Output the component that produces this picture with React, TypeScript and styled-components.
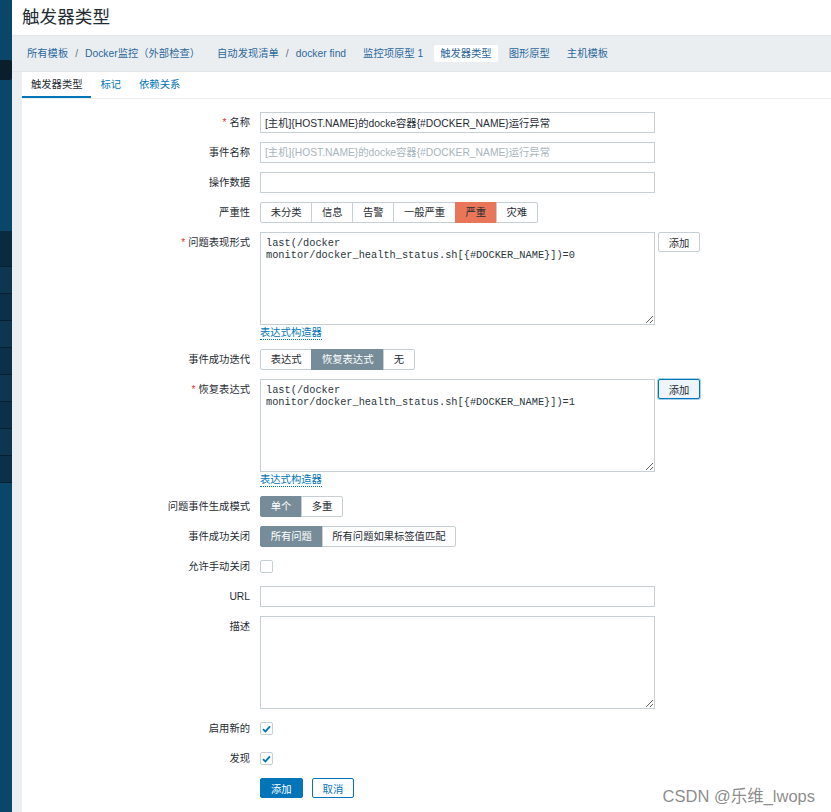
import styled, { createGlobalStyle } from "styled-components";

const GlobalStyle = createGlobalStyle`
  html, body {
    margin: 0;
    padding: 0;
  }
  body {
    font-family: "Liberation Sans", "Noto Sans CJK SC", sans-serif;
    font-size: 10.3px;
    color: #1f2c33;
    background: #ebeef0;
  }
  * {
    box-sizing: border-box;
  }
`;

const Page = styled.div`
  position: relative;
  display: flex;
  min-height: 812px;
`;

const Sidebar = styled.aside`
  width: 12px;
  flex: none;
  background: #0a466a;
  display: flex;
  flex-direction: column;
  padding-top: 60px;
`;

const Collapse = styled.div`
  width: 12px;
  height: 20px;
  background: #0b1e2b;
  border-radius: 0 3px 3px 0;
  margin-bottom: 151px;
`;

const MenuItem = styled.div<{ $active?: boolean; $shade?: boolean }>`
  height: ${(p) => (p.$active ? 36 : 27)}px;
  background: ${(p) => (p.$active ? "#0a2a3f" : p.$shade ? "#0c3049" : "#0e3651")};
  border-bottom: 1px solid #081f2f;
`;

const Main = styled.main`
  flex: 1;
  display: flex;
  flex-direction: column;
  min-width: 0;
`;

const Header = styled.header`
  height: 36px;
  background: #fff;
  padding-left: 10px;
  border-bottom: 1px solid #e2e6e9;
`;

const Title = styled.h1`
  margin: 0;
  font-size: 17.6px;
  font-weight: normal;
  line-height: 35px;
  color: #1f2c33;
`;

const Crumbs = styled.nav`
  height: 36px;
  display: flex;
  align-items: center;
  gap: 5px;
  padding-left: 9px;
  border-bottom: 1px solid #e2e6e9;
`;

const CrumbGroup = styled.div<{ $selected?: boolean }>`
  display: flex;
  align-items: center;
  gap: 7px;
  padding: 0 6px;
  height: 17px;
  line-height: 17px;
  border-radius: 2px;
  background: ${(p) => (p.$selected ? "#fff" : "transparent")};
  color: #2c689c;
  white-space: nowrap;
`;

const Slash = styled.span`
  color: #5b6f7b;
`;

const Panel = styled.section`
  flex: 1;
  margin-left: 10px;
  background: #fff;
`;

const Tabs = styled.div`
  display: flex;
  height: 27px;
  border-bottom: 1px solid #ebeef0;
`;

const Tab = styled.div<{ $active?: boolean }>`
  padding: 0 9px;
  line-height: 25px;
  border-bottom: 2px solid ${(p) => (p.$active ? "#0275b8" : "transparent")};
  color: ${(p) => (p.$active ? "#1f2c33" : "#0275b8")};
`;

const Form = styled.div`
  display: grid;
  grid-template-columns: 228px 1fr;
  column-gap: 10px;
  row-gap: 9px;
  padding-top: 13px;
`;

const Label = styled.div`
  text-align: right;
  line-height: 21px;
  white-space: nowrap;
  color: #1f2c33;
`;

const Req = styled.span`
  color: #e33734;
  margin-right: 3px;
`;

const Field = styled.div`
  display: flex;
  align-items: flex-start;
  gap: 3px;
  min-height: 21px;
`;

const Stack = styled.div`
  display: flex;
  flex-direction: column;
  align-items: flex-start;
`;

const TextInput = styled.input`
  width: 395px;
  height: 21px;
  padding: 0 4px;
  border: 1px solid #c5cfd4;
  font: inherit;
  color: #1f2c33;
  outline: none;
  &::placeholder {
    color: #a8b5bc;
  }
`;

const TextArea = styled.textarea`
  width: 395px;
  height: 93px;
  margin: 0;
  padding: 4px 5px;
  border: 1px solid #c5cfd4;
  font-family: "Liberation Mono", "Noto Sans CJK SC", monospace;
  font-size: 10.3px;
  line-height: 12px;
  color: #2a363d;
  resize: vertical;
  outline: none;
  display: block;
`;

const SideButton = styled.button<{ $focused?: boolean }>`
  width: 42px;
  height: 20px;
  padding: 0;
  font: inherit;
  color: #1f2c33;
  border-radius: 2px;
  background: ${(p) => (p.$focused ? "#edf4fa" : "#fff")};
  border: 1px solid ${(p) => (p.$focused ? "#0275b8" : "#c5cfd4")};
  box-shadow: ${(p) => (p.$focused ? "0 0 0 1px rgba(2, 117, 184, 0.35)" : "none")};
`;

const BuilderLink = styled.a`
  margin-top: 2px;
  line-height: 12px;
  color: #0275b8;
  text-decoration: none;
  border-bottom: 1px dotted #0275b8;
`;

const Segmented = styled.div`
  display: inline-flex;
  height: 21px;
`;

const Segment = styled.span<{ $selected?: boolean; $severity?: boolean }>`
  padding: 0 9.7px;
  line-height: 19px;
  white-space: nowrap;
  border: 1px solid
    ${(p) => (p.$selected ? (p.$severity ? "#e97659" : "#768d99") : "#c5cfd4")};
  background: ${(p) => (p.$selected ? (p.$severity ? "#e97659" : "#768d99") : "#fff")};
  color: ${(p) => (p.$selected && !p.$severity ? "#fff" : "#1f2c33")};
  & + & {
    margin-left: -1px;
  }
  &:first-child {
    border-radius: 2px 0 0 2px;
  }
  &:last-child {
    border-radius: 0 2px 2px 0;
  }
`;

const CheckRow = styled.div`
  display: flex;
  align-items: center;
  height: 21px;
`;

const Box = styled.span`
  width: 13px;
  height: 13px;
  border: 1px solid #c5cfd4;
  border-radius: 2px;
  background: #fff;
  display: flex;
  align-items: center;
  justify-content: center;
`;

const Actions = styled.div`
  display: flex;
  gap: 9px;
`;

const Button = styled.button<{ $primary?: boolean }>`
  height: 20px;
  padding: 0 10px;
  font: inherit;
  border-radius: 2px;
  border: 1px solid #0275b8;
  background: ${(p) => (p.$primary ? "#0275b8" : "#fff")};
  color: ${(p) => (p.$primary ? "#fff" : "#0275b8")};
`;

const Watermark = styled.div`
  position: absolute;
  right: 16px;
  bottom: 5px;
  font-family: "Liberation Sans", "Noto Sans CJK SC", sans-serif;
  font-size: 16.5px;
  color: rgba(110, 110, 110, 0.8);
  pointer-events: none;
`;

function Check({ checked }: { checked?: boolean }) {
  return (
    <CheckRow>
      <Box>
        {checked && (
          <svg width="9" height="8" viewBox="0 0 9 8">
            <polyline points="1,4.2 3.4,6.4 8,1.4" fill="none" stroke="#0275b8" strokeWidth="1.8" />
          </svg>
        )}
      </Box>
    </CheckRow>
  );
}

const severities = ["未分类", "信息", "告警", "一般严重", "严重", "灾难"];

function App() {
  return (
    <Page>
      <GlobalStyle />
      <Sidebar>
        <Collapse />
        <MenuItem $active />
        <MenuItem />
        <MenuItem $shade />
        <MenuItem />
        <MenuItem $shade />
        <MenuItem />
        <MenuItem $shade />
        <MenuItem />
        <MenuItem $shade />
      </Sidebar>
      <Main>
        <Header>
          <Title>触发器类型</Title>
        </Header>
        <Crumbs>
          <CrumbGroup>
            <span>所有模板</span>
            <Slash>/</Slash>
            <span>Docker监控（外部检查）</span>
          </CrumbGroup>
          <CrumbGroup>
            <span>自动发现清单</span>
            <Slash>/</Slash>
            <span>docker find</span>
          </CrumbGroup>
          <CrumbGroup>监控项原型 1</CrumbGroup>
          <CrumbGroup $selected>触发器类型</CrumbGroup>
          <CrumbGroup>图形原型</CrumbGroup>
          <CrumbGroup>主机模板</CrumbGroup>
        </Crumbs>
        <Panel>
          <Tabs>
            <Tab $active>触发器类型</Tab>
            <Tab>标记</Tab>
            <Tab>依赖关系</Tab>
          </Tabs>
          <Form>
            <Label>
              <Req>*</Req>名称
            </Label>
            <Field>
              <TextInput defaultValue="[主机]{HOST.NAME}的docke容器{#DOCKER_NAME}运行异常" />
            </Field>

            <Label>事件名称</Label>
            <Field>
              <TextInput placeholder="[主机]{HOST.NAME}的docke容器{#DOCKER_NAME}运行异常" />
            </Field>

            <Label>操作数据</Label>
            <Field>
              <TextInput />
            </Field>

            <Label>严重性</Label>
            <Field>
              <Segmented>
                {severities.map((s) => (
                  <Segment key={s} $severity $selected={s === "严重"}>
                    {s}
                  </Segment>
                ))}
              </Segmented>
            </Field>

            <Label>
              <Req>*</Req>问题表现形式
            </Label>
            <Field>
              <Stack>
                <TextArea
                  readOnly
                  defaultValue="last(/docker monitor/docker_health_status.sh[{#DOCKER_NAME}])=0"
                />
                <BuilderLink>表达式构造器</BuilderLink>
              </Stack>
              <SideButton>添加</SideButton>
            </Field>

            <Label>事件成功迭代</Label>
            <Field>
              <Segmented>
                <Segment>表达式</Segment>
                <Segment $selected>恢复表达式</Segment>
                <Segment>无</Segment>
              </Segmented>
            </Field>

            <Label>
              <Req>*</Req>恢复表达式
            </Label>
            <Field>
              <Stack>
                <TextArea
                  readOnly
                  defaultValue="last(/docker monitor/docker_health_status.sh[{#DOCKER_NAME}])=1"
                />
                <BuilderLink>表达式构造器</BuilderLink>
              </Stack>
              <SideButton $focused>添加</SideButton>
            </Field>

            <Label>问题事件生成模式</Label>
            <Field>
              <Segmented>
                <Segment $selected>单个</Segment>
                <Segment>多重</Segment>
              </Segmented>
            </Field>

            <Label>事件成功关闭</Label>
            <Field>
              <Segmented>
                <Segment $selected>所有问题</Segment>
                <Segment>所有问题如果标签值匹配</Segment>
              </Segmented>
            </Field>

            <Label>允许手动关闭</Label>
            <Field>
              <Check />
            </Field>

            <Label>URL</Label>
            <Field>
              <TextInput />
            </Field>

            <Label>描述</Label>
            <Field>
              <TextArea />
            </Field>

            <Label>启用新的</Label>
            <Field>
              <Check checked />
            </Field>

            <Label>发现</Label>
            <Field>
              <Check checked />
            </Field>

            <Label />
            <Actions>
              <Button $primary>添加</Button>
              <Button>取消</Button>
            </Actions>
          </Form>
        </Panel>
      </Main>
      <Watermark>CSDN @乐维_lwops</Watermark>
    </Page>
  );
}

export default App;
